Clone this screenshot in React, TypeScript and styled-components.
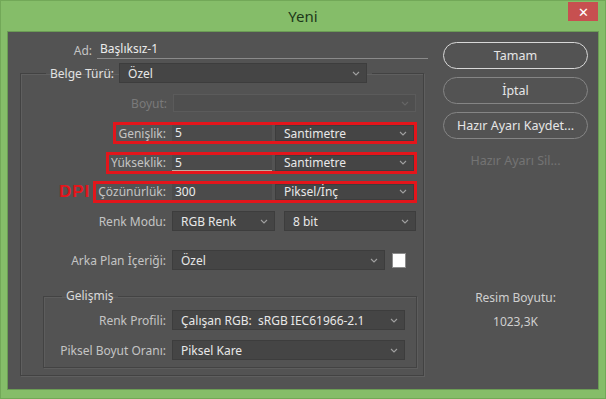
import React from 'react';
import styled, { createGlobalStyle } from 'styled-components';

const GlobalStyle = createGlobalStyle`
  html, body {
    margin: 0;
    padding: 0;
    background: #85bd69;
  }
  body {
    font-family: "Noto Sans", "Liberation Sans", sans-serif;
    font-size: 12px;
  }
`;

const Window = styled.div`
  width: 606px;
  height: 399px;
  box-sizing: border-box;
  background: #85bd69;
  border: 1px solid #72a858;
  display: flex;
  flex-direction: column;
`;

const TitleBar = styled.div`
  height: 31px;
  display: grid;
  grid-template-columns: 1fr auto 1fr;
`;

const Title = styled.div`
  grid-column: 2;
  align-self: center;
  font-size: 15px;
  color: #1d381a;
  margin-top: -1px;
`;

const CloseButton = styled.div`
  grid-column: 3;
  justify-self: end;
  align-self: start;
  width: 30px;
  height: 19px;
  margin: 1px 7px 0 0;
  background: #c75050;
  color: #fff;
  display: flex;
  align-items: center;
  justify-content: center;
  font-size: 13px;
`;

const Body = styled.div`
  flex: 1;
  margin: 0 7px 9px;
  background: #535353;
  box-shadow: 0 0 0 1px #6b9c55;
  display: flex;
`;

const LeftPanel = styled.div`
  width: 432px;
  display: flex;
  flex-direction: column;
`;

const NameRow = styled.div`
  margin-top: 8px;
  height: 20px;
  display: flex;
  align-items: center;
  gap: 5px;
`;

const Label = styled.span<{ $width?: number; $dim?: boolean }>`
  width: ${(p) => (p.$width ? `${p.$width}px` : 'auto')};
  text-align: right;
  color: ${(p) => (p.$dim ? '#7a7a7a' : '#c4c4c4')};
  white-space: nowrap;
`;

const NameInput = styled.div`
  width: 331px;
  height: 18px;
  box-sizing: border-box;
  border-bottom: 1px solid #8a8a8a;
  color: #ececec;
  padding-left: 3px;
  line-height: 16px;
`;

const Group = styled.fieldset`
  margin: 3px 0 0 12px;
  padding: 5px 0 0;
  width: 404px;
  box-sizing: border-box;
  min-inline-size: 0;
  border: 1px solid #424242;
  box-shadow: inset 1px 1px 0 #5f5f5f, 1px 1px 0 #5f5f5f;
  display: flex;
  flex-direction: column;
`;

const GroupLegend = styled.legend`
  margin-left: 25px;
  padding: 0 5px 0 4px;
  display: flex;
  align-items: center;
  gap: 5px;
  height: 20px;
  color: #e2e2e2;
`;

const SubGroup = styled.fieldset`
  margin: 14px 6px 7px 22px;
  padding: 2px 0;
  border: 1px solid #434343;
  box-shadow: inset 1px 1px 0 #5d5d5d, 1px 1px 0 #5d5d5d;
  min-inline-size: 0;
`;

const SubLegend = styled.legend`
  margin-left: 18px;
  padding: 0 4px;
  line-height: 14px;
  color: #dadada;
`;

const Row = styled.div<{ $h?: number; $right?: number; $top?: number }>`
  height: ${(p) => p.$h ?? 30}px;
  margin-top: ${(p) => p.$top ?? 0}px;
  padding-right: ${(p) => p.$right ?? 7}px;
  display: flex;
  justify-content: flex-end;
  align-items: center;
  gap: 6px;
`;

const Highlight = styled.div`
  display: flex;
  align-items: center;
  height: 16px;
  border: 3px solid #e3151b;
  padding-left: 2px;
  margin-right: -1px;
  gap: 6px;
`;

const Fields = styled.div<{ $gap?: number }>`
  display: flex;
  align-items: center;
  gap: ${(p) => p.$gap ?? 3}px;
`;

const DpiMark = styled.span`
  color: #e3151b;
  font-family: "Liberation Sans", Arial, sans-serif;
  font-weight: bold;
  font-size: 17px;
  line-height: 17px;
  letter-spacing: 1px;
  margin-right: -3px;
`;

const NumberInput = styled.div<{ $focused?: boolean }>`
  width: 100px;
  height: 16px;
  box-sizing: border-box;
  background: #4b4b4b;
  color: #ececec;
  padding-left: 3px;
  line-height: 15px;
  border-bottom: 1px solid ${(p) => (p.$focused ? '#bcae9f' : 'transparent')};
`;

const SelectBox = styled.div<{ $width: number; $height?: number; $disabled?: boolean }>`
  width: ${(p) => p.$width}px;
  height: ${(p) => p.$height ?? 20}px;
  box-sizing: border-box;
  background: ${(p) => (p.$disabled ? '#4f4f4f' : '#454545')};
  border: 1px solid ${(p) => (p.$disabled ? '#5b5b5b' : '#3d3d3d')};
  display: flex;
  align-items: center;
  justify-content: space-between;
  padding: 0 6px 0 8px;
  color: #e8e8e8;
  white-space: pre;
`;

const Swatch = styled.div`
  width: 14px;
  height: 15px;
  background: #ffffff;
  border: 1px solid #8c8c8c;
  box-sizing: border-box;
`;

const RightPanel = styled.div`
  flex: 1;
  padding: 10px 0 0 3px;
  display: flex;
  flex-direction: column;
  align-items: flex-start;
`;

const Button = styled.div<{ $primary?: boolean; $disabled?: boolean }>`
  width: 145px;
  height: 27px;
  box-sizing: border-box;
  border-radius: 14px;
  border: 1px solid
    ${(p) => (p.$disabled ? 'transparent' : p.$primary ? '#d8d8d8' : '#858585')};
  color: ${(p) => (p.$disabled ? '#747474' : '#e6e6e6')};
  font-size: 12.5px;
  display: flex;
  align-items: center;
  justify-content: center;
  margin-bottom: 8px;
`;

const SizeInfo = styled.div<{ $top: number }>`
  width: 145px;
  text-align: center;
  line-height: 16px;
  color: #cfcfcf;
  margin-top: ${(p) => p.$top}px;
`;

const Chevron = ({ dim }: { dim?: boolean }) => (
  <svg width="8" height="5" viewBox="0 0 8 5">
    <polyline
      points="1,1 4,4 7,1"
      fill="none"
      stroke={dim ? '#666' : '#a0a0a0'}
      strokeWidth="1.1"
    />
  </svg>
);

const Select = ({
  value,
  width,
  height,
  disabled,
}: {
  value: string;
  width: number;
  height?: number;
  disabled?: boolean;
}) => (
  <SelectBox $width={width} $height={height} $disabled={disabled}>
    <span>{value}</span>
    <Chevron dim={disabled} />
  </SelectBox>
);

function App() {
  return (
    <>
      <GlobalStyle />
      <Window>
        <TitleBar>
          <Title>Yeni</Title>
          <CloseButton>✕</CloseButton>
        </TitleBar>
        <Body>
          <LeftPanel>
            <NameRow>
              <Label $width={84}>Ad:</Label>
              <NameInput>Başlıksız-1</NameInput>
            </NameRow>

            <Group>
              <GroupLegend>
                Belge Türü:
                <Select value="Özel" width={248} />
              </GroupLegend>

              <Row>
                <Label $dim>Boyut:</Label>
                <Select value="" width={243} height={18} disabled />
              </Row>

              <Row>
                <Highlight>
                  <Label>Genişlik:</Label>
                  <Fields>
                    <NumberInput>5</NumberInput>
                    <Select value="Santimetre" width={139} height={16} />
                  </Fields>
                </Highlight>
              </Row>

              <Row $h={29}>
                <Highlight>
                  <Label>Yükseklik:</Label>
                  <Fields>
                    <NumberInput $focused>5</NumberInput>
                    <Select value="Santimetre" width={139} height={16} />
                  </Fields>
                </Highlight>
              </Row>

              <Row $h={29}>
                <DpiMark>DPI</DpiMark>
                <Highlight>
                  <Label>Çözünürlük:</Label>
                  <Fields>
                    <NumberInput>300</NumberInput>
                    <Select value="Piksel/İnç" width={139} height={16} />
                  </Fields>
                </Highlight>
              </Row>

              <Row>
                <Label>Renk Modu:</Label>
                <Fields $gap={9}>
                  <Select value="RGB Renk" width={103} />
                  <Select value="8 bit" width={132} />
                </Fields>
              </Row>

              <Row $top={9} $right={17}>
                <Label>Arka Plan İçeriği:</Label>
                <Fields $gap={7}>
                  <Select value="Özel" width={213} />
                  <Swatch />
                </Fields>
              </Row>

              <SubGroup>
                <SubLegend>Gelişmiş</SubLegend>
                <Row $right={11}>
                  <Label>Renk Profili:</Label>
                  <Select value="Çalışan RGB:  sRGB IEC61966-2.1" width={233} />
                </Row>
                <Row $right={11}>
                  <Label>Piksel Boyut Oranı:</Label>
                  <Select value="Piksel Kare" width={233} />
                </Row>
              </SubGroup>
            </Group>
          </LeftPanel>

          <RightPanel>
            <Button $primary>Tamam</Button>
            <Button>İptal</Button>
            <Button>Hazır Ayarı Kaydet...</Button>
            <Button $disabled>Hazır Ayarı Sil...</Button>
            <SizeInfo $top={108}>Resim Boyutu:</SizeInfo>
            <SizeInfo $top={8}>1023,3K</SizeInfo>
          </RightPanel>
        </Body>
      </Window>
    </>
  );
}

export default App;
